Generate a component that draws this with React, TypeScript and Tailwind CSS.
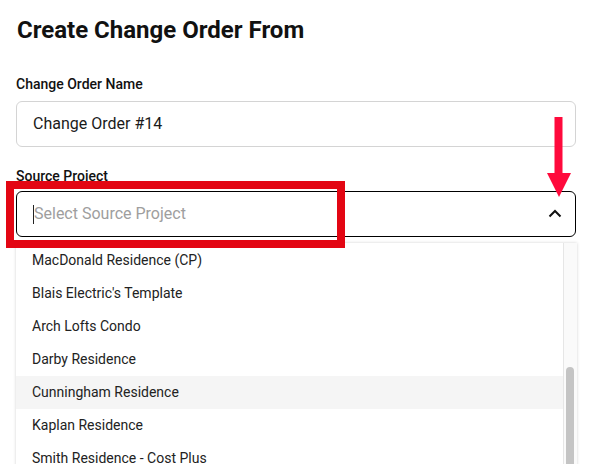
import React from "react"

const projects = [
  "MacDonald Residence (CP)",
  "Blais Electric's Template",
  "Arch Lofts Condo",
  "Darby Residence",
  "Cunningham Residence",
  "Kaplan Residence",
  "Smith Residence - Cost Plus",
  "Johnson Residence",
]

export default function App() {
  return (
    <div
      className="relative h-[464px] w-[589px] overflow-hidden bg-white text-[#1a1a1a]"
      style={{ fontFamily: "Roboto, 'Liberation Sans', sans-serif" }}
    >
      <div className="px-4 pt-[15px]">
        <h1 className="pl-[1px] text-[24px] font-bold leading-[30px] text-[#111]">Create Change Order From</h1>

        <label className="mt-[30px] block text-[14px] font-medium leading-[18px] text-[#111]">Change Order Name</label>
        <div className="mt-[8px] flex h-[46px] w-[560px] items-center rounded-md border border-[#d4d4d4] px-4 text-[16px] text-[#1a1a1a]">
          Change Order #14
        </div>

        <label className="mt-[20px] block text-[14px] font-medium leading-[18px] text-[#111]">Source Project</label>
        <div className="relative mt-[6px] w-[560px]">
          <div className="flex h-[46px] items-center rounded-md border border-black pl-4 pr-[13px]">
            <span className="h-[19px] w-px bg-[#222]" />
            <span className="flex-1 text-[16px] text-[#9e9e9e]">Select Source Project</span>
            <svg width="14" height="9" viewBox="0 0 14 9" fill="none" className="mb-px">
              <path d="M1.5 7.5 L7 2 L12.5 7.5" stroke="#111" strokeWidth="2" />
            </svg>
          </div>

          {/* dropdown menu */}
          <div className="absolute left-0 top-[52px] z-10 flex h-[260px] w-[561px] overflow-hidden bg-white shadow-[0_0_3px_rgba(0,0,0,0.18)]">
            <div className="flex-1 mt-[1px]">
              {projects.map((p) => (
                <div
                  key={p}
                  className={
                    "flex h-[33px] items-center px-4 text-[14px] text-[#222] " +
                    (p === "Cunningham Residence" ? "bg-[#f5f5f5]" : "")
                  }
                >
                  {p}
                </div>
              ))}
            </div>
            <div className="relative w-[14px] border-l border-[#e6e6e6] bg-[#fafafa]">
              <div className="absolute left-[2px] top-[124px] h-[140px] w-[8px] rounded-full bg-[#c4c4c4]" />
            </div>
          </div>
        </div>
      </div>

      {/* annotation: red box */}
      <div className="pointer-events-none absolute left-[6px] top-[181px] z-20 h-[67px] w-[339px] border-[8px] border-[#e30613]" />

      {/* annotation: red arrow */}
      <svg className="pointer-events-none absolute left-[546px] top-[117px] z-20" width="26" height="81" viewBox="0 0 26 81">
        <rect x="8.5" y="0" width="8" height="58" fill="#ff0a3c" />
        <polygon points="1,56 25,56 13,80" fill="#ff0a3c" />
      </svg>
    </div>
  )
}
